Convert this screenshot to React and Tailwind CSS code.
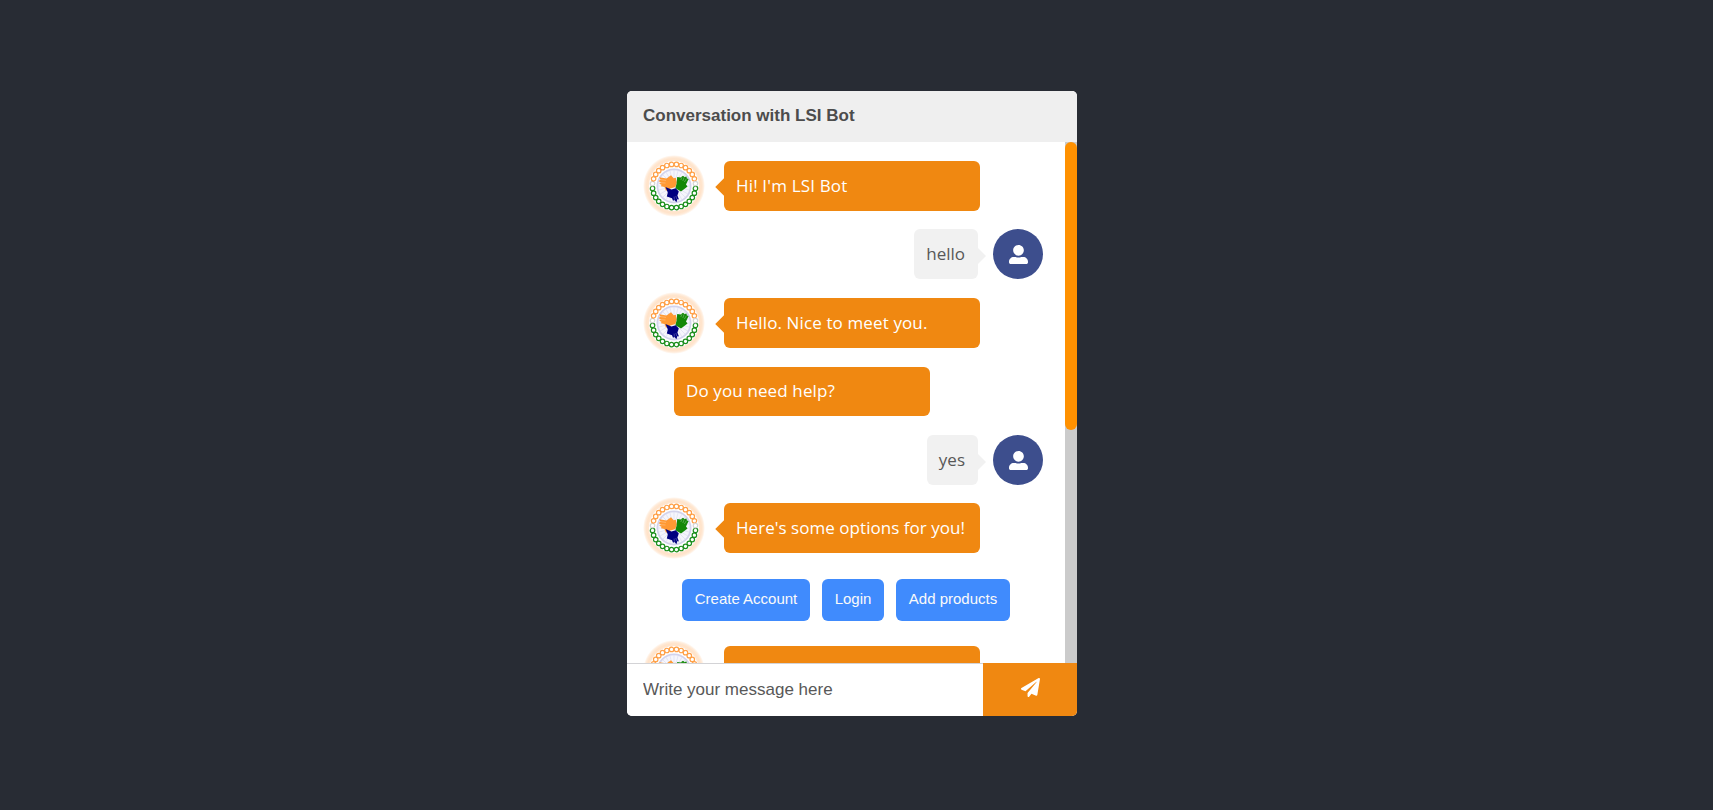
import React from "react";
import { FaPaperPlane, FaUserAlt } from "react-icons/fa";

const LINK_COUNT = 28;

function chainColor(angle) {
  const height = -Math.sin(angle);
  if (height > 0.17) return "#ffa048";
  if (height < -0.1) return "#1d8f1d";
  return "#d5d5d5";
}

const links = Array.from({ length: LINK_COUNT }, (_, i) => {
  const angle = ((i + 0.5) / LINK_COUNT) * Math.PI * 2;
  return { x: 21.6 * Math.cos(angle), y: 21.7 * Math.sin(angle), color: chainColor(angle) };
});

const spokes = Array.from({ length: 24 }, (_, i) => {
  const angle = (i / 24) * Math.PI * 2;
  return { x: Math.cos(angle), y: Math.sin(angle) };
});

function BotAvatar() {
  return (
    <svg viewBox="-31 -31 62 62" className="-my-1.5 h-[62px] w-[62px] shrink-0">
      <defs>
        <radialGradient id="glow">
          <stop offset="0.8" stopColor="#ffe6d0" />
          <stop offset="0.88" stopColor="#ffe3ca" />
          <stop offset="0.94" stopColor="#ffecdb" />
          <stop offset="1" stopColor="#ffffff" />
        </radialGradient>
      </defs>
      <circle r="31" fill="url(#glow)" />
      <circle r="25" fill="#fff" />
      <circle r="16.6" fill="#f6f6fc" stroke="#d3d3ec" strokeWidth="1.8" />
      {spokes.map((s, i) => (
        <line key={i} x1={s.x * 5} y1={s.y * 5} x2={s.x * 16} y2={s.y * 16} stroke="#dcdcf0" strokeWidth="0.7" />
      ))}
      {links.map((l, i) => (
        <circle key={i} cx={l.x} cy={l.y} r="2.25" fill="none" stroke={l.color} strokeWidth="1.2" />
      ))}
      <path
        d="M-14.8 -8.8 L-7.5 -7.6 L-3 -10.8 L-.3 -7.8 L1.8 -8.3 L2.8 -3.5 L1.4 1 L-3.5 2.4 L-8 4.8 L-9.5 1 L-13 .2 L-12.5 -1.2 L-14.8 -2.2 L-13.2 -3.4 L-15.5 -5 L-13.5 -6.2 Z"
        fill="#ff9933"
      />
      <path
        d="M2.6 -2.5 L3.2 -9 L6.5 -8.6 L9 -10.2 L10.5 -9 L12.4 -9.6 L13 -7.6 L14.6 -7 L12 -1.5 L13.5 .5 L10 3.2 L7 5.4 L1.4 2.2 Z"
        fill="#138808"
      />
      <path
        d="M-8.5 1 L-2.6 3.4 L1.8 2.2 L4.8 5.6 L3.4 9.5 L5 13.6 L3.4 13 L2.4 16.2 L.5 14 L-1 14.8 L-2 12.2 L-7.2 10.6 L-6.2 6.6 Z"
        fill="#000080"
      />
      <path
        d="M-13.5 -6.4 L-8 -5.6 M-14 -3.3 L-8.5 -3 M8 -9 L6.8 -6 M10.2 -8.7 L8.8 -5 M12.4 -7.3 L10.4 -4 M.4 13.8 L.1 10.6 M2.8 13 L1.8 10"
        stroke="#fff"
        strokeOpacity="0.45"
        strokeWidth="0.6"
      />
    </svg>
  );
}

function BotBubble({ children, arrow = true, className = "h-[50px]" }) {
  return (
    <div
      className={`relative flex w-64 items-center whitespace-nowrap rounded-md bg-[#f08811] pl-3 text-white ${className}`}
    >
      {arrow && (
        <svg viewBox="0 0 9 18" className="absolute -left-[9px] top-[17px] h-[18px] w-[9.5px] fill-[#f08811]">
          <path d="M9 0 L0 9 L9 18 Z" />
        </svg>
      )}
      {children}
    </div>
  );
}

function BotMessage({ children, className = "" }) {
  return (
    <div className={`flex h-[50px] items-center gap-[19px] pl-4 ${className}`}>
      <BotAvatar />
      <BotBubble>{children}</BotBubble>
    </div>
  );
}

function UserMessage({ children, className = "" }) {
  return (
    <div className={`flex h-[50px] items-center justify-end gap-[15px] pr-[22px] ${className}`}>
      <div className="relative flex h-[50px] items-center rounded-md bg-[#f1f1f1] pl-[12px] pr-[13px] text-[#585858]">
        {children}
        <svg viewBox="0 0 8 16" className="absolute -right-2 top-[18.5px] h-4 w-2 fill-[#f1f1f1]">
          <path d="M0 0 L8 8 L0 16 Z" />
        </svg>
      </div>
      <div className="flex h-[50px] w-[50px] items-center justify-center rounded-full bg-[#3d4e8d]">
        <FaUserAlt className="h-[19px] w-[19px] text-white" />
      </div>
    </div>
  );
}

function Option({ children, className }) {
  return (
    <button
      className={`h-[42px] whitespace-nowrap rounded-md bg-[#408bfd] pb-0.5 text-center font-['Liberation_Sans',Arial,sans-serif] text-[15px] text-[#fafafa] ${className}`}
    >
      {children}
    </button>
  );
}

export default function App() {
  return (
    <main className="flex h-[810px] justify-center bg-[#282c34] pt-[91px] font-['Liberation_Sans',Arial,sans-serif]">
      <section className="mr-[9px] flex h-[625px] w-[450px] flex-col overflow-hidden rounded-[5px] bg-white">
        <header className="flex h-[51px] shrink-0 items-center bg-[#efefef] pb-[2px] pl-4 text-[17px] font-bold text-[#4c4c4c]">
          Conversation with LSI Bot
        </header>
        <div className="flex h-[521px] shrink-0">
          <div className="w-[438px] overflow-hidden pt-[19px] font-['Open_Sans','Noto_Sans',sans-serif] text-[17px]">
            <BotMessage>
              <span className="tracking-[0.16px]">Hi! I'm LSI Bot</span>
            </BotMessage>
            <UserMessage className="mt-[18px]">hello</UserMessage>
            <BotMessage className="mt-[19px]">
              <span className="tracking-[0.12px]">Hello. Nice to meet you.</span>
            </BotMessage>
            <div className="mt-[19px] pl-[47px]">
              <BotBubble arrow={false} className="h-[49px] pb-px">
                <span className="tracking-[0.12px]">Do you need help?</span>
              </BotBubble>
            </div>
            <UserMessage className="mt-[19px]">yes</UserMessage>
            <BotMessage className="mt-[18px]">
              <span className="tracking-[0.04px]">Here's some options for you!</span>
            </BotMessage>
            <div className="mt-[26px] flex gap-3 pl-[55px]">
              <Option className="w-32">Create Account</Option>
              <Option className="w-[62px]">Login</Option>
              <Option className="w-[114px]">Add products</Option>
            </div>
            <BotMessage className="mt-[25px]" />
          </div>
          <div className="w-3 bg-[#cbcbcb]">
            <div className="h-72 rounded-full bg-[#ff9100]" />
          </div>
        </div>
        <footer className="flex h-[53px] shrink-0">
          <input
            className="w-[356px] border-t border-[#d3d3d6] bg-white pl-4 text-[17px] text-[#585858] outline-none placeholder:text-[#585858]"
            placeholder="Write your message here"
          />
          <button aria-label="Send" className="flex w-[94px] items-center justify-center bg-[#f08811] pb-[5px]">
            <FaPaperPlane className="h-[19px] w-[19px] text-white" />
          </button>
        </footer>
      </section>
    </main>
  );
}
